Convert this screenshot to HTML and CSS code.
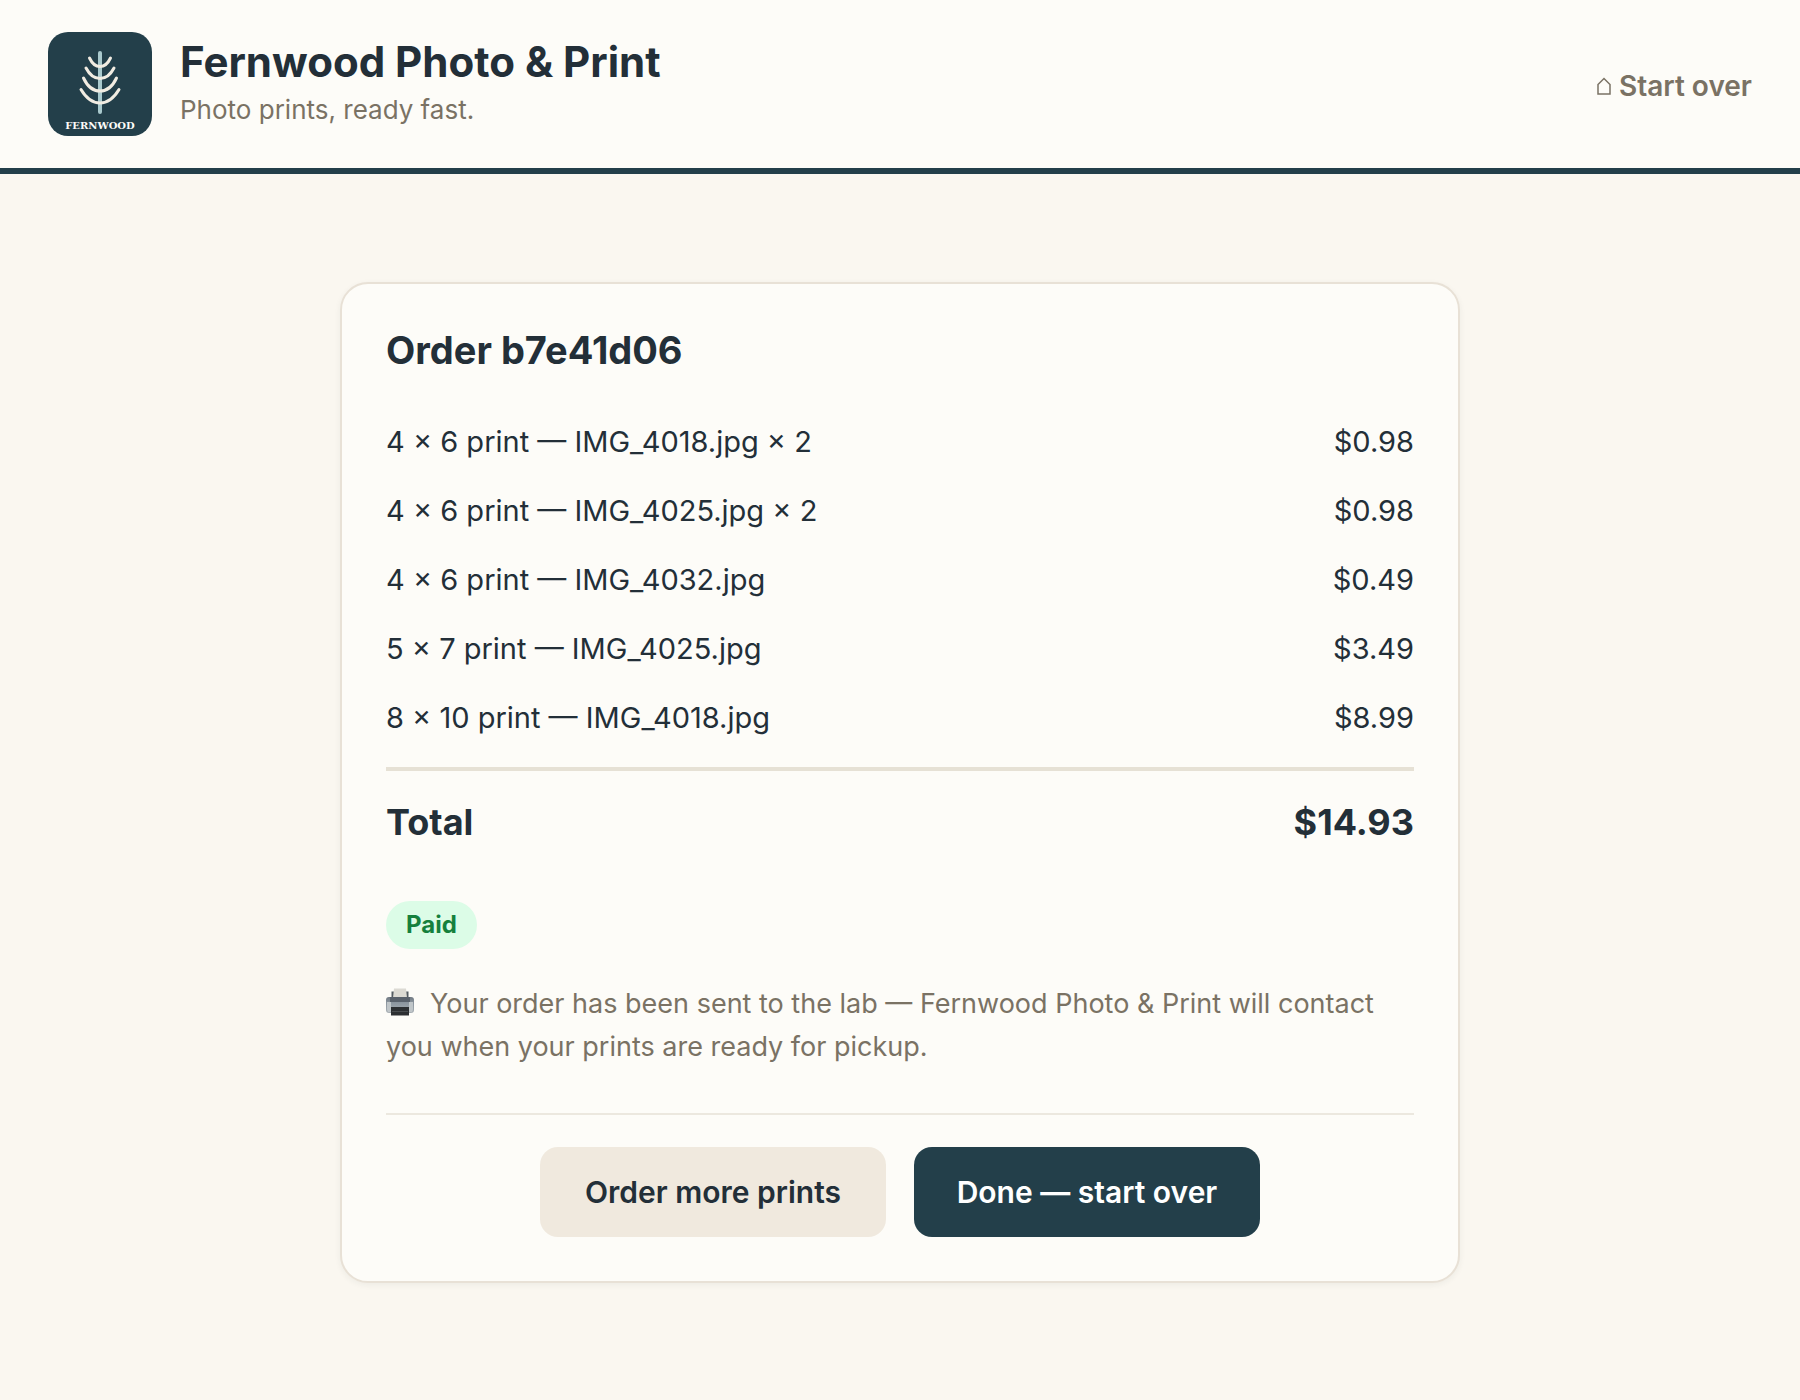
FILE: index.html
```html
<!DOCTYPE html>
<html lang="en">
<head>
<meta charset="utf-8">
<meta name="viewport" content="width=device-width, initial-scale=1">
<title>Fernwood Photo &amp; Print</title>
<link rel="stylesheet" href="styles.css">
</head>
<body>
<header class="site-header">
  <svg class="logo" viewBox="0 0 104 104" role="img" aria-label="Fernwood">
    <rect width="104" height="104" rx="20" fill="#233f4a"/>
    <path d="M52 21V80" stroke="#a9c9cd" stroke-width="4" stroke-linecap="round"/>
    <g fill="none" stroke="#f1ece2" stroke-width="3" stroke-linecap="round">
      <path d="M41.500 26Q45.500 34.500 52 34.500Q58.500 34.500 62.500 26"/>
      <path d="M38 36Q43.500 46.500 52 46.500Q60.500 46.500 66 36"/>
      <path d="M35.500 46Q41.500 59 52 59Q62.500 59 68.500 46"/>
      <path d="M33 57.500Q41 71 52 71Q63 71 71 57.500"/>
    </g>
    <text class="logo-text" x="52" y="97" text-anchor="middle">FERNWOOD</text>
  </svg>
  <div class="brand">
    <h1 class="brand-name">Fernwood Photo &amp; Print</h1>
    <p class="brand-tagline">Photo prints, ready fast.</p>
  </div>
  <a class="start-over" href="#">
    <svg class="home-icon" viewBox="0 0 14 18" aria-hidden="true"><path d="M1 17V7.500L7 1.500L13 7.500V17Z" fill="none" stroke="currentColor" stroke-width="1.500"/></svg>
    <span>Start over</span>
  </a>
</header>
<main class="page">
  <section class="card">
    <h2 class="order-title">Order b7e41d06</h2>
    <table class="items">
      <tbody>
        <tr><td>4 × 6 print — IMG_4018.jpg × 2</td><td class="price">$0.98</td></tr>
        <tr><td>4 × 6 print — IMG_4025.jpg × 2</td><td class="price">$0.98</td></tr>
        <tr><td>4 × 6 print — IMG_4032.jpg</td><td class="price">$0.49</td></tr>
        <tr><td>5 × 7 print — IMG_4025.jpg</td><td class="price">$3.49</td></tr>
        <tr><td>8 × 10 print — IMG_4018.jpg</td><td class="price">$8.99</td></tr>
      </tbody>
      <tfoot>
        <tr><th scope="row">Total</th><td class="price">$14.93</td></tr>
      </tfoot>
    </table>
    <span class="badge">Paid</span>
    <p class="notice"><svg class="printer-icon" viewBox="0 0 28 28" aria-hidden="true">
      <defs>
        <linearGradient id="body" x1="0" y1="0" x2="0" y2="1"><stop offset="0" stop-color="#707982"/><stop offset=".35" stop-color="#8b959e"/><stop offset="1" stop-color="#a9b0b5"/></linearGradient>
      </defs>
      <path d="M5.500 3.500H8V10H5.500ZM20 3.500H22.500V10H20Z" fill="#555c62"/>
      <path d="M8 .500H20L21 10H7Z" fill="#dcdad3"/>
      <rect y="9" width="28" height="16" rx="3" fill="url(#body)"/>
      <path d="M4 9H24V14H4Z" fill="#59616b"/>
      <path d="M1 14H5V24H2Q1 23 1 21ZM23 14H27V21Q27 23 26 24H23Z" fill="#c0c6c9"/>
      <path d="M5 19H23V27.500H5Z" fill="#2c2f32"/>
      <path d="M6 23H22V24H6Z" fill="#494d50"/>
    </svg>Your order has been sent to the lab — Fernwood Photo &amp; Print will contact you when your prints are ready for pickup.</p>
    <div class="actions">
      <button class="button button-secondary" type="button">Order more prints</button>
      <button class="button button-primary" type="button">Done — start over</button>
    </div>
  </section>
</main>
</body>
</html>
```
FILE: styles.css
```css
* {
  box-sizing: border-box;
}

body {
  margin: 0;
  min-height: 100vh;
  background: #faf7f0;
  color: #232f38;
  font-family: Inter, "Liberation Sans", sans-serif;
}

h1, h2, p {
  margin: 0;
}

.site-header {
  display: flex;
  align-items: center;
  gap: 28px;
  padding: 32px 48px;
  background: #fdfcf8;
  border-bottom: 6px solid #233f4a;
}

.logo {
  width: 104px;
  height: 104px;
  flex: none;
}

.logo-text {
  font: bold 10px "DejaVu Serif", serif;
  fill: #fdfcf8;
}

.brand-name {
  font-size: 42px;
  line-height: 52px;
  font-weight: 700;
}

.brand-tagline {
  font-size: 26px;
  line-height: 44px;
  color: #7a7264;
}

.start-over {
  display: flex;
  align-items: center;
  gap: 8px;
  margin-left: auto;
  padding-top: 4px;
  font-size: 28px;
  line-height: 40px;
  font-weight: 600;
  color: #7a7264;
  text-decoration: none;
}

.home-icon {
  width: 14px;
  height: 18px;
}

.page {
  padding: 108px 48px;
}

.card {
  max-width: 1120px;
  margin: 0 auto;
  padding: 44px;
  background: #fdfcf8;
  border: 2px solid #e8e1d6;
  border-radius: 28px;
  box-shadow: 0 2px 6px rgba(35, 47, 56, 0.06);
}

.order-title {
  margin-bottom: 35px;
  font-size: 38px;
  line-height: 44px;
  font-weight: 700;
}

.items {
  width: 100%;
  border-spacing: 0;
  font-size: 29px;
  line-height: 45px;
}

.items td,
.items th {
  padding: 12px 0;
  text-align: left;
}

.items .price {
  text-align: right;
}

.items tbody tr:last-child td {
  padding-bottom: 27px;
}

.items tfoot td,
.items tfoot th {
  padding: 24px 0;
  border-top: 4px solid #e6e1d5;
  font-size: 36px;
  line-height: 54px;
  font-weight: 700;
}

.badge {
  display: block;
  width: fit-content;
  margin-top: 28px;
  padding: 6px 20px;
  border-radius: 24px;
  background: #dcfce7;
  color: #15803d;
  font-size: 24px;
  line-height: 36px;
  font-weight: 700;
}

.notice {
  margin-top: 33px;
  font-size: 27px;
  line-height: 43px;
  color: #7a7264;
}

.printer-icon {
  width: 28px;
  height: 28px;
  margin-right: 16px;
  vertical-align: -3px;
}

.actions {
  display: flex;
  flex-wrap: wrap;
  justify-content: center;
  gap: 28px;
  margin-top: 45px;
  padding-top: 32px;
  border-top: 2px solid #ece8df;
}

.button {
  min-width: 346px;
  padding: 22px 40px;
  border: 0;
  border-radius: 18px;
  font: inherit;
  font-size: 30px;
  line-height: 46px;
  font-weight: 600;
  cursor: pointer;
}

.button-secondary {
  background: #f0e9de;
  color: #232f38;
}

.button-primary {
  background: #233f4a;
  color: #ffffff;
}
```
